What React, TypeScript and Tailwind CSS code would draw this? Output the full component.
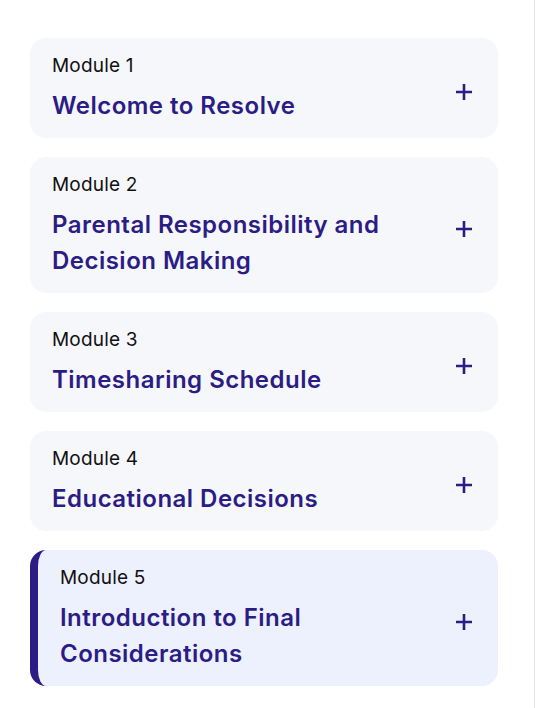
import React from "react";

const modules = [
  { n: 1, title: "Welcome to Resolve" },
  { n: 2, title: "Parental Responsibility and Decision Making" },
  { n: 3, title: "Timesharing Schedule" },
  { n: 4, title: "Educational Decisions" },
  { n: 5, title: "Introduction to Final Considerations", active: true },
];

function Plus() {
  return (
    <svg width="18" height="18" viewBox="0 0 18 18" className="mt-[6px] shrink-0">
      <path d="M9 1v16M1 9h16" stroke="#2b1d85" strokeWidth="2.6" strokeLinecap="butt" />
    </svg>
  );
}

export default function App() {
  return (
    <div
      className="w-[548px] h-[708px] bg-white flex"
      style={{ fontFamily: "Inter, 'Noto Sans', sans-serif" }}
    >
      <div className="w-[534px] flex flex-col gap-[19px] pt-[38px] pl-[30px] pr-[36px]">
        {modules.map((m) => (
          <div
            key={m.n}
            className={
              m.active
                ? "flex items-center rounded-2xl bg-[#edf0fd] border-l-[8px] border-[#2b1d85] pl-[22px] pr-[25px] pt-4 pb-[14px]"
                : "flex items-center rounded-2xl bg-[#f6f7fb] pl-[22px] pr-[25px] pt-4 pb-[14px]"
            }
          >
            <div className="flex-1 flex flex-col gap-[10px]">
              <div className="text-[19px] leading-[24px] tracking-[0.01em] text-[#111111]">Module {m.n}</div>
              <div className="text-[24px] leading-[36px] tracking-[0.02em] font-semibold text-[#2b1d85] pr-[30px]">
                {m.title}
              </div>
            </div>
            <Plus />
          </div>
        ))}
      </div>
      <div className="w-px h-full bg-[#e4e4e7]" />
      <div className="flex-1 bg-white" />
    </div>
  );
}
